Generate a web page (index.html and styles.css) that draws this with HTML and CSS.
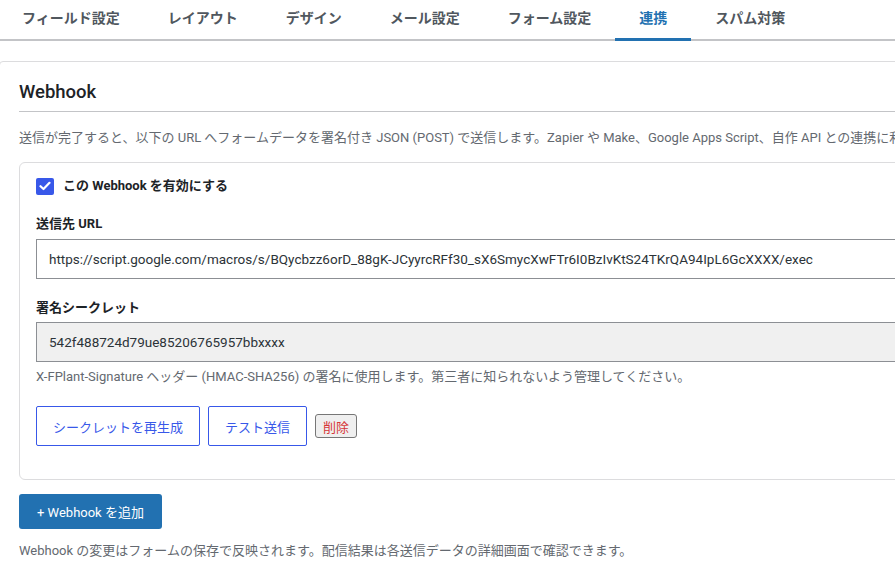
FILE: index.html
```html
<!DOCTYPE html>
<html lang="ja">
<head>
    <meta charset="UTF-8">
    <meta name="viewport" content="width=device-width, initial-scale=1.0">
    <title>連携 - Webhook</title>
    <link rel="stylesheet" href="styles.css">
</head>
<body>
    <nav class="tabs">
        <a href="#">フィールド設定</a>
        <a href="#">レイアウト</a>
        <a href="#">デザイン</a>
        <a href="#">メール設定</a>
        <a href="#">フォーム設定</a>
        <a href="#" class="active">連携</a>
        <a href="#">スパム対策</a>
    </nav>

    <div class="panel">
        <h2 class="section-title">Webhook</h2>
        <p class="desc">送信が完了すると、以下の URL へフォームデータを署名付き JSON (POST) で送信します。Zapier や Make、Google Apps Script、自作 API との連携に利用できます。</p>

        <div class="hook-card">
            <label class="enable">
                <span class="check">
                    <svg width="12" height="10" viewBox="0 0 12 10"><path d="M1.5 5.2 4.5 8 10.5 1.8" fill="none" stroke="#fff" stroke-width="2.2" stroke-linecap="round" stroke-linejoin="round"/></svg>
                </span>
                この Webhook を有効にする
            </label>

            <div class="field">
                <label for="hookUrl">送信先 URL</label>
                <input type="text" id="hookUrl" value="https://script.google.com/macros/s/BQycbzz6orD_88gK-JCyyrcRFf30_sX6SmycXwFTr6I0BzIvKtS24TKrQA94IpL6GcXXXX/exec">
            </div>

            <div class="field">
                <label for="hookSecret">署名シークレット</label>
                <input type="text" id="hookSecret" class="readonly" value="542f488724d79ue85206765957bbxxxx" readonly>
                <p class="help">X-FPlant-Signature ヘッダー (HMAC-SHA256) の署名に使用します。第三者に知られないよう管理してください。</p>
            </div>

            <div class="actions">
                <button class="btn-outline">シークレットを再生成</button>
                <button class="btn-outline">テスト送信</button>
                <button class="btn-delete">削除</button>
            </div>
        </div>

        <button class="btn-primary">+ Webhook を追加</button>
        <p class="note">Webhook の変更はフォームの保存で反映されます。配信結果は各送信データの詳細画面で確認できます。</p>
    </div>
</body>
</html>
```

FILE: styles.css
```css
html, body {
    margin: 0;
    padding: 0;
    overflow: hidden;
}
body {
    font-family: Roboto, "Noto Sans CJK JP", sans-serif;
    font-size: 13px;
    color: #1d2327;
    background: #fff;
    width: 1200px;
}
.tabs {
    display: flex;
    margin-left: -2px;
    border-bottom: 2px solid #c3c4c7;
}
.tabs a {
    display: block;
    padding: 9px 24px 11px;
    line-height: 18px;
    font-size: 14px;
    font-weight: 700;
    color: #50575e;
    text-decoration: none;
    border-bottom: 3px solid transparent;
    margin-bottom: -2px;
}
.tabs a.active {
    color: #2271b1;
    border-bottom-color: #2271b1;
}
.panel {
    margin: 20px 0 0 -1px;
    border: 1px solid #dcdcde;
    border-radius: 4px;
    padding: 0 0 40px 19px;
}
.section-title {
    margin: 18px 0 0;
    padding-bottom: 7px;
    font-size: 18.5px;
    line-height: 24px;
    font-weight: 500;
    border-bottom: 1px solid #c3c4c7;
}
.desc {
    margin: 16px 0 0;
    line-height: 20px;
    color: #646970;
    white-space: nowrap;
}
.hook-card {
    margin-top: 14px;
    border: 1px solid #dcdcde;
    border-radius: 6px;
    padding: 13px 16px 33px;
}
.enable {
    display: flex;
    align-items: center;
    gap: 9px;
    line-height: 20px;
    font-weight: 700;
}
.check {
    width: 18px;
    height: 17px;
    border-radius: 2px;
    background: #3858e9;
    display: flex;
    align-items: center;
    justify-content: center;
}
.field label {
    display: block;
    margin-top: 18px;
    margin-bottom: 5px;
    line-height: 20px;
    font-weight: 700;
}
.field + .field label {
    margin-top: 19px;
    margin-bottom: 4px;
}
.field input {
    display: block;
    width: 100%;
    box-sizing: border-box;
    height: 40px;
    padding: 0 12px;
    border: 1px solid #8c8f94;
    border-radius: 0;
    font-family: inherit;
    font-size: 13.5px;
    color: #2c3338;
    background: #fff;
}
.field input.readonly {
    background: #f0f0f0;
}
.help {
    margin: 5px 0 0;
    line-height: 20px;
    color: #646970;
}
.actions {
    display: flex;
    align-items: center;
    gap: 8px;
    margin-top: 19px;
}
.btn-outline {
    height: 40px;
    padding: 0 16px;
    border: 1px solid #3858e9;
    border-radius: 2px;
    background: #fff;
    color: #3858e9;
    font-family: inherit;
    font-size: 13px;
}
.btn-delete {
    height: 24px;
    padding: 0 7px;
    border: 1px solid #767676;
    border-radius: 3px;
    background: #efefef;
    color: #d63638;
    font-family: inherit;
    font-size: 13px;
}
.btn-primary {
    display: block;
    margin-top: 14px;
    height: 35px;
    padding: 0 18px;
    border: none;
    border-radius: 3px;
    background: #2271b1;
    color: #fff;
    font-family: inherit;
    font-size: 13px;
}
.note {
    margin: 12px 0 0;
    line-height: 20px;
    color: #646970;
}
```
